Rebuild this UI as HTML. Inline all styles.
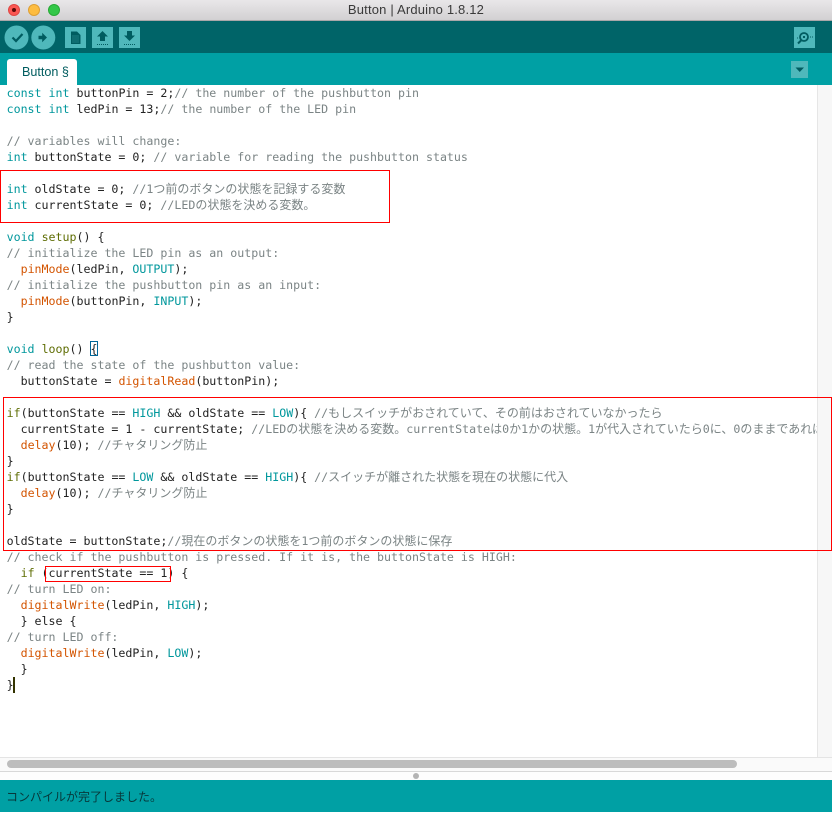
<!DOCTYPE html>
<html lang="ja">
<head>
<meta charset="utf-8">
<title>Button | Arduino 1.8.12</title>
<style>
html,body{margin:0;padding:0;width:832px;height:812px;overflow:hidden;background:#fff}
#title{position:absolute;left:0;top:0;width:832px;height:20px;background:linear-gradient(#e9e7e9,#d2d0d2);border-bottom:1px solid #a9a7a9;text-align:center;font:13px/19px "Liberation Sans","DejaVu Sans",sans-serif;letter-spacing:.18px;color:#3a3a3a}
.dot{position:absolute;top:4px;width:12px;height:12px;border-radius:50%}
#toolbar{position:absolute;left:0;top:21px;width:832px;height:32px;background:#006468}
#tabbar{position:absolute;left:0;top:53px;width:832px;height:32px;background:#00a0a4}
#tab{position:absolute;left:7px;top:6px;width:70px;height:26px;background:#fff;border-radius:3px 3px 0 0;font:12.6px/26px "Liberation Sans",sans-serif;color:#005c5f;box-sizing:border-box;padding-left:15px}
#code{position:absolute;left:0;top:0;width:817px;height:757px;overflow:hidden;clip-path:inset(85px 0 0 0)}
.l{position:absolute;left:6.6px;height:16px;white-space:pre;font:11.62px/16px "DejaVu Sans Mono","Liberation Mono",monospace;color:#222}
.l i{font:12px/16px "Noto Sans CJK JP",sans-serif;color:#7b8485}
.c{color:#7b8485}.k{color:#00979c}.f{color:#5e6d03}.o{color:#d35400}
#vs{position:absolute;left:817px;top:85px;width:15px;height:672px;background:#f7f7f7;border-left:1px solid #e6e6e6;box-sizing:border-box}
#hs{position:absolute;left:0;top:757px;width:832px;height:14px;background:#fafafa;border-top:1px solid #e4e4e4;box-sizing:border-box}
#thumb{position:absolute;left:7px;top:760px;width:730px;height:8px;border-radius:4px;background:#bdbdbd}
#split{position:absolute;left:0;top:771px;width:832px;height:9px;background:#fdfdfd;border-top:1px solid #d8d8d8;box-sizing:border-box}
#grip{position:absolute;left:413px;top:772.5px;width:6px;height:6px;border-radius:50%;background:#b4b4b4}
#status{position:absolute;left:0;top:780px;width:832px;height:32px;background:#00a0a4;font:12px/34px "Noto Sans CJK JP",sans-serif;color:#07383a;padding-left:6px;box-sizing:border-box}
.r{position:absolute;border:1px solid #f00;box-sizing:border-box}
</style>
</head>
<body>
<div id="title">Button | Arduino 1.8.12
<span class="dot" style="left:8px;background:#fc5753;border:.5px solid #df4744;box-sizing:border-box"></span>
<span style="position:absolute;left:12px;top:8px;width:4px;height:4px;border-radius:50%;background:#5a0a08"></span>
<span class="dot" style="left:28px;background:#fdbc40;border:.5px solid #de9f34;box-sizing:border-box"></span>
<span class="dot" style="left:48px;background:#33c748;border:.5px solid #27aa35;box-sizing:border-box"></span>
</div>
<div id="toolbar"></div>
<div id="tabbar"><div id="tab">Button §</div></div>
<svg style="position:absolute;left:0;top:21px" width="832" height="64" viewBox="0 21 832 64">
<circle cx="16.500" cy="37.500" r="12" fill="#4fb8bb"/>
<path d="M12.500 37.500l3.500 3.500 6.500-7" fill="none" stroke="#005c60" stroke-width="2.200"/>
<circle cx="43.300" cy="37.500" r="12" fill="#4fb8bb"/>
<path d="M38.500 35.800h3.700v-3l4.800 4.700-4.800 4.700v-3h-3.700z" fill="#005c60"/>
<rect x="65" y="27" width="21" height="21" fill="#4fb8bb"/>
<path d="M71 31.500h6l3.500 3.500v9h-9.500z" fill="#005c60"/>
<path d="M72.500 36h6.500M72.500 38h6.500M72.500 40h6.500M72.500 42h6.500" stroke="#4fb8bb" stroke-width=".8" stroke-dasharray="1 1"/>
<rect x="92" y="27" width="21" height="21" fill="#4fb8bb"/>
<path d="M102.500 31l5.500 5.500h-3v4.500h-5v-4.500h-3z" fill="#005c60"/>
<path d="M97 44.500h11" stroke="#005c60" stroke-width="1" stroke-dasharray="1 1"/>
<rect x="119" y="27" width="21" height="21" fill="#4fb8bb"/>
<path d="M127 31h5v4.500h3l-5.500 5.500-5.500-5.500h3z" fill="#005c60"/>
<path d="M124 44.500h11" stroke="#005c60" stroke-width="1" stroke-dasharray="1 1"/>
<rect x="794" y="27" width="21" height="21" fill="#4fb8bb"/>
<circle cx="804" cy="37" r="4" fill="none" stroke="#005c60" stroke-width="1.800"/>
<rect x="803" y="36" width="2" height="2" fill="#005c60"/>
<path d="M801 40.500l-3 3" stroke="#005c60" stroke-width="2"/>
<path d="M810 37h4M797 38h1" stroke="#005c60" stroke-width="1" stroke-dasharray="1 1"/>
<rect x="791" y="61" width="17" height="17" fill="#4fb8bb"/>
<path d="M795.500 67.500h8.500l-4.250 4.500z" fill="#005c60"/>
</svg>

<div id="code">
<div class="l" style="top:85px"><span class="k">const</span> <span class="k">int</span> buttonPin = 2;<span class="c">// the number of the pushbutton pin</span></div>
<div class="l" style="top:101px"><span class="k">const</span> <span class="k">int</span> ledPin = 13;<span class="c">// the number of the LED pin</span></div>
<div class="l" style="top:133px"><span class="c">// variables will change:</span></div>
<div class="l" style="top:149px"><span class="k">int</span> buttonState = 0; <span class="c">// variable for reading the pushbutton status</span></div>
<div class="l" style="top:181px"><span class="k">int</span> oldState = 0; <span class="c">//1</span><i>つ前のボタンの状態を記録する変数</i></div>
<div class="l" style="top:197px"><span class="k">int</span> currentState = 0; <span class="c">//LED</span><i>の状態を決める変数。</i></div>
<div class="l" style="top:229px"><span class="k">void</span> <span class="f">setup</span>() {</div>
<div class="l" style="top:245px"><span class="c">// initialize the LED pin as an output:</span></div>
<div class="l" style="top:261px">  <span class="o">pinMode</span>(ledPin, <span class="k">OUTPUT</span>);</div>
<div class="l" style="top:277px"><span class="c">// initialize the pushbutton pin as an input:</span></div>
<div class="l" style="top:293px">  <span class="o">pinMode</span>(buttonPin, <span class="k">INPUT</span>);</div>
<div class="l" style="top:309px">}</div>
<div class="l" style="top:341px"><span class="k">void</span> <span class="f">loop</span>() {</div>
<div class="l" style="top:357px"><span class="c">// read the state of the pushbutton value:</span></div>
<div class="l" style="top:373px">  buttonState = <span class="o">digitalRead</span>(buttonPin);</div>
<div class="l" style="top:405px"><span class="f">if</span>(buttonState == <span class="k">HIGH</span> &amp;&amp; oldState == <span class="k">LOW</span>){ <span class="c">//</span><i>もしスイッチがおされていて、その前はおされていなかったら</i></div>
<div class="l" style="top:421px">  currentState = 1 - currentState; <span class="c">//LED</span><i>の状態を決める変数。</i><span class="c">currentState</span><i>は</i><span class="c">0</span><i>か</i><span class="c">1</span><i>かの状態。</i><span class="c">1</span><i>が代入されていたら</i><span class="c">0</span><i>に、</i><span class="c">0</span><i>のままであれば1に</i></div>
<div class="l" style="top:437px">  <span class="o">delay</span>(10); <span class="c">//</span><i>チャタリング防止</i></div>
<div class="l" style="top:453px">}</div>
<div class="l" style="top:469px"><span class="f">if</span>(buttonState == <span class="k">LOW</span> &amp;&amp; oldState == <span class="k">HIGH</span>){ <span class="c">//</span><i>スイッチが離された状態を現在の状態に代入</i></div>
<div class="l" style="top:485px">  <span class="o">delay</span>(10); <span class="c">//</span><i>チャタリング防止</i></div>
<div class="l" style="top:501px">}</div>
<div class="l" style="top:533px">oldState = buttonState;<span class="c">//</span><i>現在のボタンの状態を</i><span class="c">1</span><i>つ前のボタンの状態に保存</i></div>
<div class="l" style="top:549px"><span class="c">// check if the pushbutton is pressed. If it is, the buttonState is HIGH:</span></div>
<div class="l" style="top:565px">  <span class="f">if</span> (currentState == 1) {</div>
<div class="l" style="top:581px"><span class="c">// turn LED on:</span></div>
<div class="l" style="top:597px">  <span class="o">digitalWrite</span>(ledPin, <span class="k">HIGH</span>);</div>
<div class="l" style="top:613px">  } else {</div>
<div class="l" style="top:629px"><span class="c">// turn LED off:</span></div>
<div class="l" style="top:645px">  <span class="o">digitalWrite</span>(ledPin, <span class="k">LOW</span>);</div>
<div class="l" style="top:661px">  }</div>
<div class="l" style="top:677px">}</div>
</div>

<div style="position:absolute;left:90px;top:341px;width:8px;height:15px;border:1px solid #006699;box-sizing:border-box"></div>
<div style="position:absolute;left:13px;top:677px;width:2px;height:16px;background:#333300"></div>

<div id="vs"></div>
<div id="hs"></div>
<div id="thumb"></div>
<div id="split"></div>
<div id="grip"></div>
<div id="status">コンパイルが完了しました。</div>

<div class="r" style="left:0;top:170px;width:390px;height:53px"></div>
<div class="r" style="left:3px;top:397px;width:829px;height:154px"></div>
<div class="r" style="left:45px;top:566px;width:126px;height:16px"></div>
</body>
</html>
